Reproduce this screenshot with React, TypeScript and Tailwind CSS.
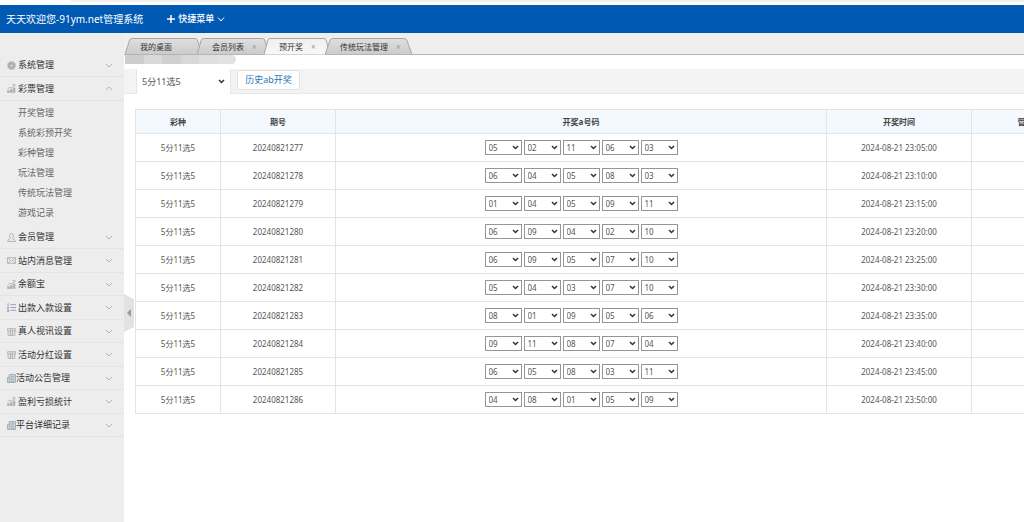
import { useState } from 'react'

type IconName = 'gear' | 'chart' | 'user' | 'mail' | 'list' | 'gift' | 'news'

interface MenuItem {
  title: string
  icon: IconName
  tight?: boolean
}

const topMenu: MenuItem[] = [
  { title: '系统管理', icon: 'gear' },
  { title: '彩票管理', icon: 'chart' },
]

const lotteryLinks = ['开奖管理', '系统彩预开奖', '彩种管理', '玩法管理', '传统玩法管理', '游戏记录']

const bottomMenu: MenuItem[] = [
  { title: '会员管理', icon: 'user' },
  { title: '站内消息管理', icon: 'mail' },
  { title: '余额宝', icon: 'chart' },
  { title: '出款入款设置', icon: 'list' },
  { title: '真人视讯设置', icon: 'gift' },
  { title: '活动分红设置', icon: 'gift' },
  { title: '活动公告管理', icon: 'news', tight: true },
  { title: '盈利亏损统计', icon: 'chart' },
  { title: '平台详细记录', icon: 'news', tight: true },
]

const tabs = [
  { title: '我的桌面', closable: false, width: 'w-[72px]' },
  { title: '会员列表', closable: true, width: 'w-[67px]' },
  { title: '预开奖', closable: true, width: 'w-[61px]' },
  { title: '传统玩法管理', closable: true, width: 'w-[82px]' },
]

const draws = [
  { issue: '20240821277', time: '2024-08-21 23:05:00', codes: ['05', '02', '11', '06', '03'] },
  { issue: '20240821278', time: '2024-08-21 23:10:00', codes: ['06', '04', '05', '08', '03'] },
  { issue: '20240821279', time: '2024-08-21 23:15:00', codes: ['01', '04', '05', '09', '11'] },
  { issue: '20240821280', time: '2024-08-21 23:20:00', codes: ['06', '09', '04', '02', '10'] },
  { issue: '20240821281', time: '2024-08-21 23:25:00', codes: ['06', '09', '05', '07', '10'] },
  { issue: '20240821282', time: '2024-08-21 23:30:00', codes: ['05', '04', '03', '07', '10'] },
  { issue: '20240821283', time: '2024-08-21 23:35:00', codes: ['08', '01', '09', '05', '06'] },
  { issue: '20240821284', time: '2024-08-21 23:40:00', codes: ['09', '11', '08', '07', '04'] },
  { issue: '20240821285', time: '2024-08-21 23:45:00', codes: ['06', '05', '08', '03', '11'] },
  { issue: '20240821286', time: '2024-08-21 23:50:00', codes: ['04', '08', '01', '05', '09'] },
]

const balls = ['01', '02', '03', '04', '05', '06', '07', '08', '09', '10', '11']

function Icon({ name }: { name: IconName }) {
  return (
    <svg viewBox="0 0 16 16" className="h-[9px] w-[9px] shrink-0" fill="none" stroke="#b0b0b4" strokeWidth="1.6">
      {name === 'gear' && (
        <>
          <circle cx="8" cy="8" r="4" strokeWidth="5" />
          <circle cx="8" cy="8" r="6.6" strokeWidth="2.4" strokeDasharray="3.2 2" />
        </>
      )}
      {name === 'chart' && (
        <>
          <path d="M1 15v-3h3v3zM6 15v-5h3v5zM11 15V7h3v8z" fill="#b8b8bb" />
          <path d="M1 9l4-3 3 1 6-5M10 1h4v3" />
        </>
      )}
      {name === 'user' && (
        <path d="M8 1C5.500 1 4.500 2.800 4.500 5S6 9 6 10s-5 1.500-5 5h14c0-3.500-5-4-5-5s1.500-2.800 1.500-5S10.500 1 8 1z" />
      )}
      {name === 'mail' && <path d="M1 3h14v10H1zM1 3l7 6 7-6M1 13l5-5M15 13l-5-5" />}
      {name === 'list' && (
        <path d="M6 3h10M6 8h10M6 13h10M2 1v4M1 2l1-1M0 7h3v2H0M0 12h3v3H0" stroke="#8d9bb0" />
      )}
      {name === 'gift' && <path d="M1 3h14v4H1zM2 7v8h12V7M6 3v12M10 3v12M6 11h4" />}
      {name === 'news' && (
        <path
          d="M4 1h11v14H1V6h3zM4 6v8M6 4h7M6 7h7M6 10h7M6 13h7"
          fill="#dde1e3"
          stroke="#98a6ad"
        />
      )}
    </svg>
  )
}

function Chevron({ up }: { up?: boolean }) {
  return (
    <svg viewBox="0 0 8 5" className="h-[5px] w-2 shrink-0" fill="none" stroke="#b4b4b4">
      <path d={up ? 'M1 4l3-3 3 3' : 'M1 1l3 3 3-3'} />
    </svg>
  )
}

function MenuRow({ item, open }: { item: MenuItem; open?: boolean }) {
  return (
    <button
      type="button"
      aria-expanded={!!open}
      className={`flex h-full w-full items-center border-b border-[#e4e4e4] pl-[7px] pr-[11px] text-[9px] leading-3 text-[#333] ${
        item.tight ? 'gap-0' : 'gap-[2px]'
      }`}
    >
      <Icon name={item.icon} />
      <span className="flex-1 text-left">{item.title}</span>
      <Chevron up={open} />
    </button>
  )
}

function Sidebar() {
  return (
    <nav className="w-[124px] shrink-0 bg-[#ededed] pt-[21px]">
      <ul>
        {topMenu.map((item, i) => (
          <li key={item.title} className="h-[23px] even:h-6">
            <MenuRow item={item} open={i === 1} />
          </li>
        ))}
      </ul>
      <ul className="pb-[3px] pt-[2px] text-[9px] leading-5 text-[#666]">
        {lotteryLinks.map((title) => (
          <li key={title} className="h-5">
            <a href="#" className="block pl-[18px]">{title}</a>
          </li>
        ))}
      </ul>
      <ul>
        {bottomMenu.map((item) => (
          <li key={item.title} className="h-[23px] even:h-6">
            <MenuRow item={item} />
          </li>
        ))}
      </ul>
    </nav>
  )
}

function TabBar() {
  const [active, setActive] = useState(2)
  return (
    <div className="flex h-[22px] items-end border-b border-[#b5b5b5] bg-[#efefef] pl-px">
      {tabs.map((tab, i) => (
        <button
          key={tab.title}
          type="button"
          onClick={() => setActive(i)}
          className={`relative -mb-px flex h-[17px] shrink-0 items-center pl-[15px] text-[8px] leading-none text-[#333] ${tab.width}`}
        >
          <svg
            viewBox="0 0 100 17"
            preserveAspectRatio="none"
            className="absolute inset-y-0 left-0 h-full w-[calc(100%+5px)]"
          >
            <defs>
              <linearGradient id={`tab${i}`} x1="0" y1="0" x2="0" y2="1">
                <stop offset="0" stopColor={i === active ? '#efefef' : '#dfdfdf'} />
                <stop offset="1" stopColor={i === active ? '#f8f8f8' : '#cbcbcb'} />
              </linearGradient>
            </defs>
            <path
              d="M0 16.500L6 2Q7 .5 9 .5H91Q93 .5 94 2L100 16.500"
              fill={`url(#tab${i})`}
              stroke="#a6a6a6"
              vectorEffect="non-scaling-stroke"
            />
            {i !== active && <path d="M0 16.500H100" stroke="#b5b5b5" vectorEffect="non-scaling-stroke" />}
          </svg>
          <span className="relative whitespace-nowrap">{tab.title}</span>
          {tab.closable && <span className="relative pl-2 text-[#999]">×</span>}
        </button>
      ))}
    </div>
  )
}

function SelectArrow({ className }: { className: string }) {
  return (
    <svg
      viewBox="0 0 7 5"
      className={`pointer-events-none absolute h-[5px] w-[7px] ${className}`}
      fill="none"
      stroke="#333"
      strokeWidth="1.5"
    >
      <path d="M1 1l2.500 2.500L6 1" />
    </svg>
  )
}

function NumberSelect({ value, label }: { value: string; label: string }) {
  return (
    <span className="relative flex">
      <select
        defaultValue={value}
        aria-label={label}
        className="h-[15px] w-[37px] appearance-none border border-[#959595] bg-white pl-[3px] text-[8px] leading-3 text-[#555]"
      >
        {balls.map((n) => (
          <option key={n}>{n}</option>
        ))}
      </select>
      <SelectArrow className="right-[3px] top-[5px]" />
    </span>
  )
}

function DrawTable() {
  const head = 'border border-[#e4e4e4] font-bold text-[#444]'
  const cell = 'border border-[#e4e4e4]'
  return (
    <table className="w-[calc(100%+56px)] table-fixed border-collapse text-center text-[8px] leading-3 text-[#555]">
      <colgroup>
        <col className="w-[85px]" />
        <col className="w-[115px]" />
        <col />
        <col className="w-[145px]" />
        <col className="w-[108px]" />
      </colgroup>
      <thead>
        <tr className="h-6 bg-[#f3f9fe]">
          <th className={head}>彩种</th>
          <th className={head}>期号</th>
          <th className={head}>开奖a号码</th>
          <th className={head}>开奖时间</th>
          <th className={head}>管理</th>
        </tr>
      </thead>
      <tbody>
        {draws.map((draw) => (
          <tr key={draw.issue} className="h-7">
            <td className={cell}>5分11选5</td>
            <td className={cell}>{draw.issue}</td>
            <td className={cell}>
              <div className="flex justify-center gap-[2px]">
                {draw.codes.map((code, i) => (
                  <NumberSelect key={i} value={code} label={`${draw.issue} 第${i + 1}位`} />
                ))}
              </div>
            </td>
            <td className={cell}>{draw.time}</td>
            <td className={cell}></td>
          </tr>
        ))}
      </tbody>
    </table>
  )
}

export default function App() {
  return (
    <div className="flex min-h-screen flex-col overflow-hidden bg-white font-['Noto_Sans','Noto_Sans_CJK_SC',sans-serif]">
      <div className="h-[5px] pl-[70px]">
        <div className="h-[2px] rounded-bl bg-[#f0f0f0]" />
      </div>
      <header className="flex h-7 items-center bg-[#0059b3] pl-[6px] text-white">
        <h1 className="text-[10px] leading-4">天天欢迎您-91ym.net管理系统</h1>
        <button type="button" className="ml-6 flex items-center gap-[3px] text-[9px] leading-4">
          <svg viewBox="0 0 8 8" className="h-2 w-2" stroke="currentColor" strokeWidth="1.5">
            <path d="M4 0v8M0 4h8" />
          </svg>
          <span className="font-medium">快捷菜单</span>
          <svg viewBox="0 0 8 5" className="h-[5px] w-2" fill="none" stroke="currentColor">
            <path d="M1 .5l3 3.500 3-3.500" />
          </svg>
        </button>
      </header>

      <div className="flex flex-1">
        <Sidebar />
        <main className="relative min-w-0 flex-1">
          <TabBar />
          {/* Masked address strip */}
          <div className="absolute left-px top-[22px] flex h-[9px] w-[111px] overflow-hidden rounded-r-md">
            <div className="flex-1 bg-[#cdcdcd]" />
            <div className="flex-1 bg-[#d9d9d9]" />
            <div className="flex-1 bg-[#d0d0d0]" />
            <div className="flex-1 bg-[#d8d8d8]" />
            <div className="flex-1 bg-[#dedede]" />
            <div className="flex-1 bg-[#e2e2e2]" />
          </div>

          <div className="mt-[14px] flex h-[25px] items-start border-b border-[#e8e8e8] bg-[#f3f3f3] pl-3">
            <span className="relative flex">
              <select
                aria-label="彩种"
                className="h-[25px] w-[95px] appearance-none border-x border-[#e6e6e6] bg-white pl-[5px] text-[9px] text-[#555]"
              >
                <option>5分11选5</option>
              </select>
              <SelectArrow className="right-[6px] top-[10px]" />
            </span>
            <button
              type="button"
              className="ml-[6px] mt-px h-5 w-[63px] rounded-[2px] border border-[#e3e3e3] bg-white text-[9px] leading-3 text-[#2779b5]"
            >
              历史ab开奖
            </button>
          </div>

          <div className="overflow-hidden pl-[11px] pt-[15px]">
            <DrawTable />
          </div>

          {/* Sidebar collapse handle */}
          <button type="button" aria-label="收起菜单" className="absolute left-0 top-[261px] h-[38px] w-[10px]">
            <svg viewBox="0 0 10 38" className="h-full w-full">
              <path d="M0 0L10 5V33L0 38z" fill="#e2e2e2" />
              <path d="M7 15v8l-4-4z" fill="#999" />
            </svg>
          </button>
        </main>
      </div>
    </div>
  )
}
